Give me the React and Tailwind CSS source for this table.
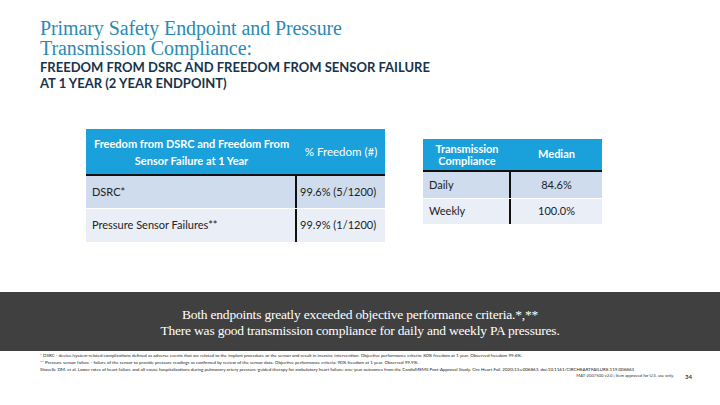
import React from "react";

const sans = { fontFamily: "Lato, 'Open Sans', sans-serif" };

const left = {
  header: ["Freedom from DSRC and Freedom From", "Sensor Failure at 1 Year"],
  value: "% Freedom (#)",
  rows: [
    { label: "DSRC*", value: "99.6% (5/1200)", bg: "bg-[#cfdcee]", h: "h-[32px]" },
    { label: "Pressure Sensor Failures**", value: "99.9% (1/1200)", bg: "bg-[#e9eef7]", h: "h-[33px]" },
  ],
};

const right = [
  { label: "Daily", value: "84.6%", bg: "bg-[#cfdcee]", h: "h-[26px]" },
  { label: "Weekly", value: "100.0%", bg: "bg-[#e9eef7]", h: "h-[25px]" },
];

const footnotes = [
  "* DSRC - device/system-related complications defined as adverse events that are related to the implant procedure or the sensor and result in invasive intervention. Objective performance criteria: 80% freedom at 1 year. Observed freedom 99.6%.",
  "** Pressure sensor failure - failure of the sensor to provide pressure readings as confirmed by review of the sensor data. Objective performance criteria: 90% freedom at 1 year. Observed 99.9%.",
  "Shavelle DM, et al. Lower rates of heart failure and all-cause hospitalizations during pulmonary artery pressure-guided therapy for ambulatory heart failure: one-year outcomes from the CardioMEMS Post-Approval Study. Circ Heart Fail. 2020;13:e006863. doi:10.1161/CIRCHEARTFAILURE.119.006863",
];

export default function App() {
  return (
    <div className="w-[720px] h-[405px] bg-white overflow-hidden flex flex-col" style={sans}>
      {/* Title */}
      <div className="pl-[40px] pt-[18px]">
        <h1
          className="text-[20px] leading-[20px] text-[#2a8ab4] tracking-[-0.1px]"
          style={{ fontFamily: "'Liberation Serif', serif" }}
        >
          Primary Safety Endpoint and Pressure
          <br />
          Transmission Compliance:
        </h1>
        <p className="mt-[1px] text-[13px] leading-[16px] font-bold text-[#17334b]">
          FREEDOM FROM DSRC AND FREEDOM FROM SENSOR FAILURE
          <br />
          AT 1 YEAR (2 YEAR ENDPOINT)
        </p>
      </div>

      {/* Tables */}
      <div className="flex items-start mt-[38px] pl-[86px] gap-[38px]">
        <div className="w-[299px]">
          <div className="flex h-[47px] bg-[#1aa0da] text-white text-[11px] font-bold border-b-2 border-[#111]">
            <div className="w-[211px] flex items-center justify-center text-center leading-[17px]">
              {left.header[0]}
              <br />
              {left.header[1]}
            </div>
            <div className="flex-1 flex items-center justify-center font-normal text-[11.5px]">{left.value}</div>
          </div>
          <div className="flex flex-col gap-[1px] text-[11px] text-[#222]">
            {left.rows.map((r) => (
              <div key={r.label} className={`flex ${r.h} ${r.bg}`}>
                <div className="w-[211px] flex items-center pl-[6px] border-r-2 border-[#111]">{r.label}</div>
                <div className="flex-1 flex items-center pl-[3px]">{r.value}</div>
              </div>
            ))}
          </div>
        </div>

        <div className="w-[179px] mt-[10px]">
          <div className="flex h-[33px] bg-[#1aa0da] text-white text-[11px] font-bold border-b-2 border-[#111]">
            <div className="w-[88px] flex items-center justify-center text-center leading-[12px]">
              Transmission
              <br />
              Compliance
            </div>
            <div className="flex-1 flex items-center justify-center">Median</div>
          </div>
          <div className="flex flex-col gap-[1px] text-[11px] text-[#222]">
            {right.map((r) => (
              <div key={r.label} className={`flex ${r.h} ${r.bg}`}>
                <div className="w-[88px] flex items-center pl-[6px] border-r-2 border-[#111]">{r.label}</div>
                <div className="flex-1 flex items-center justify-center">{r.value}</div>
              </div>
            ))}
          </div>
        </div>
      </div>

      {/* Conclusion band */}
      <div
        className="mt-[50px] h-[59px] bg-[#404040] text-white flex flex-col items-center justify-center text-[13.5px] leading-[16px] tracking-[-0.2px] pt-[3px]"
        style={{ fontFamily: "'Liberation Serif', serif" }}
      >
        <p>Both endpoints greatly exceeded objective performance criteria.*,**</p>
        <p>There was good transmission compliance for daily and weekly PA pressures.</p>
      </div>

      {/* Footnotes */}
      <div className="pl-[40px] pt-[1px] text-[4.5px] leading-[7px] text-[#222]">
        {footnotes.map((f) => (
          <p key={f} className="whitespace-nowrap">{f}</p>
        ))}
      </div>
      <div className="flex justify-end items-center gap-[11px] pr-[28px] -mt-[1px]">
        <span className="text-[4.2px] text-[#333]">MAT-2007500 v2.0 | Item approved for U.S. use only.</span>
        <span className="text-[6px] font-bold text-[#333]">34</span>
      </div>
    </div>
  );
}
